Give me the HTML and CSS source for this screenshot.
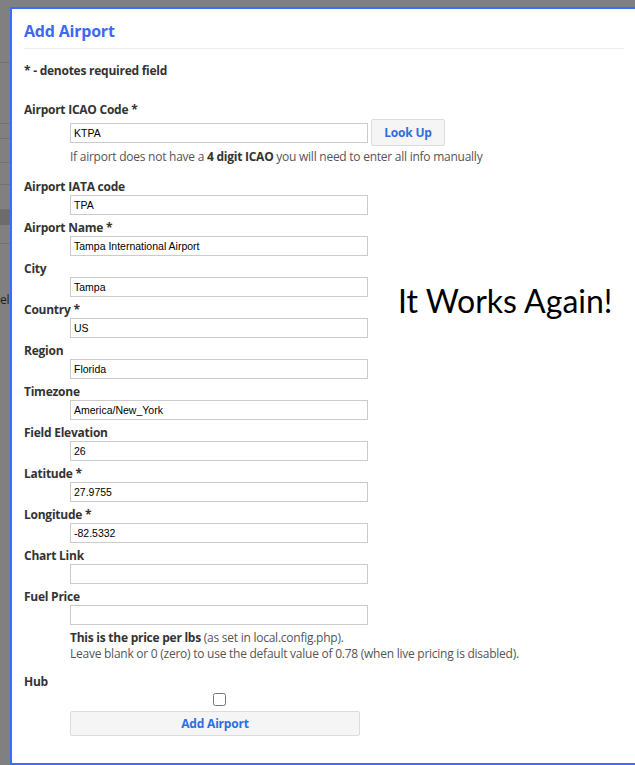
FILE: index.html
```html
<!DOCTYPE html>
<html>
<head>
<meta charset="utf-8">
<link rel="stylesheet" href="styles.css">
</head>
<body>
<div class="screen">
  <div class="strip">
    <div class="seg s1"></div>
    <div class="seg s2"></div>
    <div class="seg s3"></div>
    <div class="seg s4"></div>
    <div class="seg s5"></div>
    <div class="seg s6"></div>
    <div class="band"></div>
    <div class="seg s7"></div>
    <div class="cut">el</div>
  </div>
  <div class="dialog">
    <div class="dlg-head"><h2 class="title">Add Airport</h2></div>
    <p class="req">* - denotes required field</p>
    <div class="icao">
      <div class="label">Airport ICAO Code *</div>
      <div class="control-row">
        <input class="text" type="text" value="KTPA">
        <button class="btn lookup" type="button">Look Up</button>
      </div>
      <div class="help">If airport does not have a <b>4 digit ICAO</b> you will need to enter all info manually</div>
    </div>
    <div class="split">
      <div class="fields">
        <div class="field"><div class="label">Airport IATA code</div><div class="control"><input class="text" type="text" value="TPA"></div></div>
        <div class="field"><div class="label">Airport Name *</div><div class="control"><input class="text" type="text" value="Tampa International Airport"></div></div>
        <div class="field"><div class="label">City</div><div class="control"><input class="text" type="text" value="Tampa"></div></div>
        <div class="field"><div class="label">Country *</div><div class="control"><input class="text" type="text" value="US"></div></div>
        <div class="field"><div class="label">Region</div><div class="control"><input class="text" type="text" value="Florida"></div></div>
        <div class="field"><div class="label">Timezone</div><div class="control"><input class="text" type="text" value="America/New_York"></div></div>
        <div class="field"><div class="label">Field Elevation</div><div class="control"><input class="text" type="text" value="26"></div></div>
        <div class="field"><div class="label">Latitude *</div><div class="control"><input class="text" type="text" value="27.9755"></div></div>
        <div class="field"><div class="label">Longitude *</div><div class="control"><input class="text" type="text" value="-82.5332"></div></div>
        <div class="field"><div class="label">Chart Link</div><div class="control"><input class="text" type="text" value=""></div></div>
        <div class="field"><div class="label">Fuel Price</div><div class="control"><input class="text" type="text" value=""></div></div>
      </div>
      <div class="aside">It Works Again!</div>
    </div>
    <div class="note">
      <div><b>This is the price per lbs</b> (as set in local.config.php).</div>
      <div>Leave blank or 0 (zero) to use the default value of 0.78 (when live pricing is disabled).</div>
    </div>
    <div class="label hub">Hub</div>
    <div class="check-row"><input class="check" type="checkbox"></div>
    <div class="submit-row"><button class="btn submit" type="button">Add Airport</button></div>
  </div>
</div>
</body>
</html>
```
FILE: styles.css
```css
html, body {
  margin: 0;
  padding: 0;
}
body {
  background: #808080;
  width: 635px;
  height: 765px;
  overflow: hidden;
  font-family: "Open Sans", "Noto Sans", sans-serif;
}
.screen {
  display: flex;
  align-items: flex-start;
  width: 635px;
  height: 765px;
  overflow: hidden;
}
.strip {
  width: 10px;
  flex: 0 0 10px;
  display: flex;
  flex-direction: column;
}
.seg {
  border-bottom: 1px solid #717171;
}
.s1 { height: 62px; }
.s2 { height: 60px; }
.s3 { height: 14px; }
.s4 { height: 23px; }
.s5 { height: 21px; }
.s6 { height: 24px; }
.band { height: 15px; background: #6c6c6c; }
.s7 { height: 18px; }
.cut {
  margin-top: 48px;
  height: 16px;
  line-height: 16px;
  font-size: 12px;
  letter-spacing: -0.3px;
  color: #1e1e1e;
  white-space: nowrap;
}
.dialog {
  margin-top: 7px;
  flex: 0 0 auto;
  width: 640px;
  height: 758px;
  box-sizing: border-box;
  background: #fff;
  border: 2px solid #3d6bff;
  border-right: none;
  padding: 12px 0 0 12px;
  color: #333;
  letter-spacing: -0.25px;
}
.dlg-head {
  width: 600px;
  border-bottom: 1px solid #ececec;
  padding-bottom: 7px;
}
.title {
  margin: 0;
  font-size: 16px;
  line-height: 20px;
  font-weight: 700;
  color: #3c69f0;
  letter-spacing: -0.2px;
}
.req {
  margin: 14px 0 0;
  font-size: 12px;
  line-height: 16px;
  font-weight: 700;
  color: #333;
}
.label {
  font-size: 12px;
  line-height: 16px;
  font-weight: 700;
  color: #333;
}
.icao {
  margin-top: 23px;
}
.control-row {
  margin-top: 1px;
  margin-left: 46px;
  display: flex;
  align-items: center;
  height: 27px;
}
.text {
  display: block;
  box-sizing: border-box;
  width: 298px;
  height: 20px;
  margin: 0;
  padding: 0 3px;
  border: 1px solid #cbcbcb;
  border-radius: 0;
  background: #fff;
  font-family: "Liberation Sans", Arial, sans-serif;
  font-size: 10.5px;
  letter-spacing: 0;
  color: #000;
  outline: none;
}
.btn {
  box-sizing: border-box;
  margin: 0;
  padding: 0;
  background: #f5f5f5;
  border: 1px solid #dcdcdc;
  border-radius: 2px;
  font-family: "Open Sans", "Noto Sans", sans-serif;
  font-size: 12px;
  font-weight: 700;
  letter-spacing: -0.2px;
  color: #2c6fe0;
  cursor: pointer;
}
.lookup {
  margin-left: 3px;
  width: 74px;
  height: 27px;
}
.help {
  margin-top: 3px;
  margin-left: 46px;
  font-size: 12px;
  line-height: 16px;
  color: #555;
}
.help b {
  color: #333;
}
.split {
  margin-top: 14px;
  display: flex;
  align-items: flex-start;
}
.fields {
  width: 344px;
  flex: 0 0 344px;
}
.field {
  margin-bottom: 5px;
}
.control {
  margin-left: 46px;
}
.aside {
  margin-left: 30px;
  margin-top: 102px;
  font-family: Lato, "Open Sans", sans-serif;
  font-size: 32px;
  line-height: 40px;
  letter-spacing: 0;
  color: #000;
  white-space: nowrap;
}
.note {
  margin-left: 46px;
  font-size: 12px;
  line-height: 16px;
  color: #555;
}
.note b {
  color: #333;
}
.hub {
  margin-top: 12px;
}
.check-row {
  margin-left: 46px;
  width: 298px;
  margin-top: 3px;
  display: flex;
  justify-content: center;
  height: 13px;
}
.check {
  margin: 0;
  width: 13px;
  height: 13px;
}
.submit-row {
  margin-top: 5px;
  margin-left: 46px;
}
.submit {
  width: 290px;
  height: 25px;
}
```
